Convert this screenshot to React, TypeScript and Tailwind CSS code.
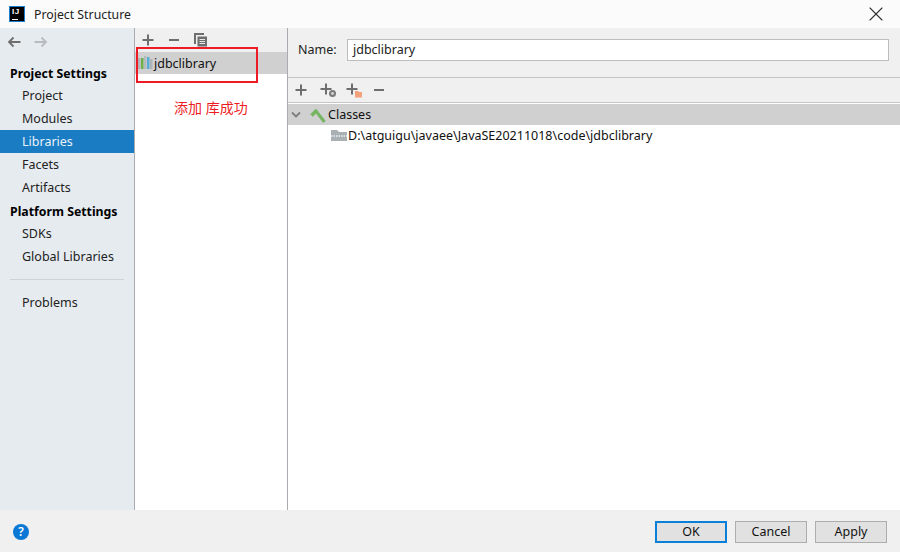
import { X } from "lucide-react";

const font = { fontFamily: '"Noto Sans", "Noto Sans CJK SC", sans-serif' };

const Plus = ({ color = "#6e6e6e" }: { color?: string }) => (
  <svg width="12" height="12" viewBox="0 0 12 12">
    <path d="M0.5 6H11.5M6 0.5V11.5" stroke={color} strokeWidth="2" fill="none" />
  </svg>
);

const Minus = () => (
  <svg width="12" height="12" viewBox="0 0 12 12">
    <path d="M1 6H11" stroke="#6e6e6e" strokeWidth="2" fill="none" />
  </svg>
);

const CopyIcon = () => (
  <svg width="14" height="14" viewBox="0 0 14 14">
    <path d="M1 11V1H10" stroke="#6e6e6e" strokeWidth="2" fill="none" />
    <path d="M3.5 3.5H13V13.5H3.5Z" fill="#6e6e6e" />
    <path d="M5.5 6.5H11M5.5 8.5H11M5.5 10.5H11" stroke="#e8e8e8" strokeWidth="1" />
  </svg>
);

const PlusGlobe = () => (
  <svg width="17" height="15" viewBox="0 0 17 15">
    <path d="M0.5 6H11.5M6 0.5V11.5" stroke="#6e6e6e" strokeWidth="2" fill="none" />
    <circle cx="12.5" cy="10.5" r="3.5" fill="#7a7a7a" />
    <circle cx="12.5" cy="10.5" r="1.4" fill="#d5d5d5" />
  </svg>
);

const PlusFolder = () => (
  <svg width="17" height="15" viewBox="0 0 17 15">
    <path d="M0.5 6H11.5M6 0.5V11.5" stroke="#6e6e6e" strokeWidth="2" fill="none" />
    <path d="M9 8H12L13 9H16V14.5H9Z" fill="#f4a27c" />
  </svg>
);

const LibIcon = () => (
  <svg width="15" height="14" viewBox="0 0 15 14">
    <rect x="0" y="2" width="2.5" height="11" fill="#aeb4b8" />
    <rect x="3" y="2" width="2.5" height="11" fill="#6fb04a" />
    <rect x="6" y="0" width="2.5" height="13" fill="#b4bbbf" />
    <rect x="9" y="1" width="2.5" height="12" fill="#58add6" />
    <rect x="12" y="3" width="2.5" height="10" fill="#aeb4b8" />
  </svg>
);

const Hammer = () => (
  <svg width="16" height="16" viewBox="0 0 16 16">
    <path d="M1.5 8.5L7 3" stroke="#75b562" strokeWidth="3.6" fill="none" />
    <path d="M5.5 3.5L14.5 15" stroke="#75b562" strokeWidth="3" fill="none" />
  </svg>
);

const FolderStripe = () => (
  <svg width="16" height="11" viewBox="0 0 16 11">
    <path d="M0 0H6L8 2H16V11H0Z" fill="#a9b1b5" />
    <path d="M0 6H16" stroke="#eef0f1" strokeWidth="1.4" strokeDasharray="1.5 1" />
  </svg>
);

const IdeaLogo = () => (
  <div className="flex h-4 w-4 flex-col justify-between border border-[#1a7fd0] bg-black px-[2px] pb-[1px]">
    <span className="font-['Liberation_Sans'] text-[8px] leading-[9px] font-bold tracking-[0.5px] text-white">IJ</span>
    <span className="block h-px w-[6px] bg-white" />
  </div>
);

const SideItem = ({ label, active }: { label: string; active?: boolean }) => (
  <div className={`flex h-[23px] items-center pl-[22px] pt-[1px] ${active ? "bg-[#1a7dc4] text-[#e8f1f8]" : "text-[#222]"}`}>
    {label}
  </div>
);

const SideHead = ({ label, drop = "pt-[1px]" }: { label: string; drop?: string }) => (
  <div className={`flex h-[23px] items-center pl-[10px] text-[12.3px] font-bold text-black ${drop}`}>{label}</div>
);

const Btn = ({ label, primary }: { label: string; primary?: boolean }) => (
  <button
    className={`h-[22px] w-[72px] bg-[#e1e1e1] text-[12.5px] leading-none text-[#111] ${
      primary ? "border-2 border-[#0a7fd8]" : "border border-[#adadad]"
    }`}
  >
    {label}
  </button>
);

export default function App() {
  return (
    <div style={font} className="relative flex h-[552px] w-[900px] flex-col overflow-hidden bg-white text-[12.5px]">
      {/* title bar */}
      <div className="flex h-[28px] items-center bg-[#fbfbfb] pl-[9px] pr-[12px]">
        <IdeaLogo />
        <span className="ml-[9px] pt-[2px] text-[12.3px] text-[#222]">Project Structure</span>
        <X className="ml-auto h-6 w-6 text-[#333]" strokeWidth={1.1} />
      </div>

      <div className="flex min-h-0 flex-1">
        {/* sidebar */}
        <div className="flex w-[135px] flex-col border-r border-[#a8acb0] bg-[#e6ebf0]">
          <div className="flex h-[28px] items-center gap-[13px] pl-[7px]">
            <svg width="14" height="12" viewBox="0 0 14 12">
              <path d="M13.5 6H2M6.5 1.5L2 6L6.5 10.5" stroke="#6e6e6e" strokeWidth="1.8" fill="none" />
            </svg>
            <svg width="14" height="12" viewBox="0 0 14 12">
              <path d="M0.5 6H12M7.5 1.5L12 6L7.5 10.5" stroke="#b9bcbf" strokeWidth="1.8" fill="none" />
            </svg>
          </div>
          <div className="mt-[6px]">
            <div className="mb-[-1px]">
              <SideHead label="Project Settings" />
            </div>
            <SideItem label="Project" />
            <SideItem label="Modules" />
            <SideItem label="Libraries" active />
            <SideItem label="Facets" />
            <SideItem label="Artifacts" />
            <SideHead label="Platform Settings" drop="pt-[3px]" />
            <SideItem label="SDKs" />
            <SideItem label="Global Libraries" />
          </div>
          <div className="mx-[10px] my-[11px] h-px bg-[#cfd3d7]" />
          <SideItem label="Problems" />
        </div>

        {/* library list */}
        <div className="flex w-[153px] flex-col border-r border-[#a8acb0]">
          <div className="flex h-[24px] items-center gap-[14px] bg-[#f0f0f0] pl-[7px]">
            <Plus />
            <Minus />
            <CopyIcon />
          </div>
          <div className="flex h-[22px] items-center bg-[#d0d0d0] pl-[3px] text-[#111]">
            <LibIcon />
            <span className="ml-[1px] pt-[2px] text-[12.5px]">jdbclibrary</span>
          </div>
        </div>

        {/* details */}
        <div className="flex min-w-0 flex-1 flex-col">
          <div className="flex h-[50px] items-start border-b border-[#c4c4c4] bg-[#f0f0f0] pl-[10px] pr-[11px] pt-[11px]">
            <span className="mt-[2px] w-[49px] text-[#222]">Name:</span>
            <div className="flex h-[22px] flex-1 items-center border border-[#bdbdbd] bg-white pl-[5px] pt-[1px] text-[#222]">
              jdbclibrary
            </div>
          </div>
          <div className="flex h-[25px] items-center gap-[13px] border-b border-[#c4c4c4] bg-[#f0f0f0] pl-[7px]">
            <Plus />
            <span className="flex w-[17px]"><PlusGlobe /></span>
            <span className="ml-[-4px] flex w-[17px]"><PlusFolder /></span>
            <span className="ml-[-3px] flex"><Minus /></span>
          </div>
          <div className="mt-px flex h-[21px] items-center bg-[#d0d0d0] pl-[3px] text-[#111]">
            <svg width="10" height="8" viewBox="0 0 10 8">
              <path d="M1 1.5L5 5.5L9 1.5" stroke="#7d7d7d" strokeWidth="1.8" fill="none" />
            </svg>
            <span className="ml-[9px] flex"><Hammer /></span>
            <span className="ml-[2px] pt-[1px]">Classes</span>
          </div>
          <div className="flex h-[21px] items-center pl-[43px] text-[#111]">
            <FolderStripe />
            <span className="ml-[1px] pt-[1px]">D:\atguigu\javaee\JavaSE20211018\code\jdbclibrary</span>
          </div>
        </div>
      </div>

      {/* footer */}
      <div className="flex h-[42px] items-center bg-[#f0f0f0] pl-[13px] pr-[13px] pt-[2px]">
        <div className="flex h-4 w-4 items-center justify-center rounded-full bg-[#0a78d4] text-[12px] font-semibold text-white">
          ?
        </div>
        <div className="ml-auto flex gap-[8px]">
          <Btn label="OK" primary />
          <Btn label="Cancel" />
          <Btn label="Apply" />
        </div>
      </div>

      {/* screenshot annotation */}
      <div className="absolute left-[136px] top-[47px] h-[36px] w-[122px] border-2 border-[#ed1c24]" />
      <div className="absolute left-[174px] top-[98px] text-[14px] leading-[20px] text-[#ed1c24]">添加 库成功</div>
    </div>
  );
}
